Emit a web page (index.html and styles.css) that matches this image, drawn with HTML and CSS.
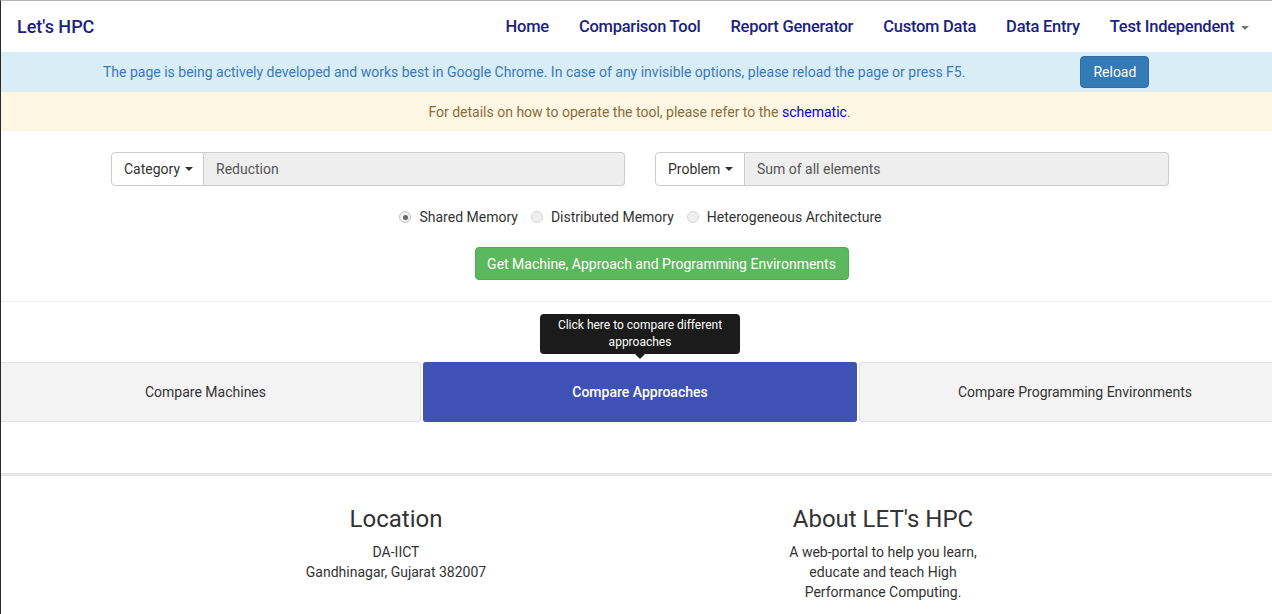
FILE: index.html
```html
<!DOCTYPE html>
<html>
<head>
<meta charset="utf-8">
<link rel="stylesheet" href="styles.css">
</head>
<body>
<div class="page">
  <nav class="navbar">
    <a class="brand">Let's HPC</a>
    <ul class="nav">
      <li>Home</li>
      <li>Comparison Tool</li>
      <li>Report Generator</li>
      <li>Custom Data</li>
      <li>Data Entry</li>
      <li>Test Independent <span class="caret nav-caret"></span></li>
    </ul>
  </nav>
  <div class="alert-info">
    <span class="info-text">The page is being actively developed and works best in Google Chrome. In case of any invisible options, please reload the page or press F5.</span>
    <button class="btn-reload">Reload</button>
  </div>
  <div class="alert-warning"><span>For details on how to operate the tool, please refer to the <a class="link">schematic</a>.</span></div>

  <div class="selectors">
    <div class="input-group">
      <div class="ig-btn cat">Category <span class="caret"></span></div>
      <div class="ig-field">Reduction</div>
    </div>
    <div class="input-group">
      <div class="ig-btn prob">Problem <span class="caret"></span></div>
      <div class="ig-field">Sum of all elements</div>
    </div>
  </div>

  <div class="radios">
    <label class="radio"><span class="dot checked"></span>Shared Memory</label>
    <label class="radio"><span class="dot"></span>Distributed Memory</label>
    <label class="radio"><span class="dot"></span>Heterogeneous Architecture</label>
  </div>

  <div class="action">
    <button class="btn-success">Get Machine, Approach and Programming Environments</button>
  </div>

  <hr class="divider">

  <div class="tabs-area">
    <div class="tabs">
      <div class="tab t1">Compare Machines</div>
      <div class="tab t2 active">Compare Approaches
        <div class="tooltip">Click here to compare different approaches</div>
      </div>
      <div class="tab t3">Compare Programming Environments</div>
    </div>
  </div>

  <footer class="footer">
    <div class="fcol c1">
      <h3>Location</h3>
      <p>DA-IICT<br>Gandhinagar, Gujarat 382007</p>
    </div>
    <div class="fcol c2">
      <h3>About LET's HPC</h3>
      <p>A web-portal to help you learn, educate and teach High Performance Computing.</p>
    </div>
  </footer>
</div>
</body>
</html>
```
FILE: styles.css
```css
html, body {
  margin: 0;
  padding: 0;
  background: #fff;
  overflow: hidden;
}
body {
  font-family: Roboto, "Liberation Sans", Arial, sans-serif;
  font-size: 14px;
  color: #333;
  border-top: 1px solid #b4b4b4;
  border-left: 1px solid #2a2a2a;
  height: 613px;
}
.page {
  width: 1279px;
}
.navbar {
  height: 51px;
  display: flex;
  align-items: center;
  justify-content: space-between;
  padding: 0 16px 0 16px;
}
.brand {
  font-size: 18px;
  font-weight: 500;
  color: #1a237e;
  margin-top: -1px;
}
.nav {
  list-style: none;
  display: flex;
  margin: 0;
  padding: 0;
}
.nav li {
  font-size: 16.5px;
  font-weight: 500;
  color: #1a237e;
  padding: 0 15px;
  letter-spacing: -0.25px;
}
.caret {
  display: inline-block;
  width: 0;
  height: 0;
  border-top: 4px solid #333;
  border-left: 4px solid transparent;
  border-right: 4px solid transparent;
  vertical-align: middle;
  margin-left: 1px;
}
.nav-caret {
  border-top-color: #777;
  margin-left: 3px;
}
.alert-info {
  height: 40px;
  background: #d9edf7;
  display: flex;
  align-items: center;
  padding-left: 102px;
}
.info-text {
  color: #3a7ab8;
}
.btn-reload {
  margin-left: 115px;
  height: 32px;
  width: 69px;
  background: #337ab7;
  border: 1px solid #2e6da4;
  border-radius: 4px;
  color: #fff;
  font-family: inherit;
  font-size: 14px;
  padding: 0;
}
.alert-warning {
  height: 39px;
  background: #fcf6e2;
  color: #8a6d3b;
  display: flex;
  align-items: center;
  justify-content: center;
  padding-right: 2px;
}
.link {
  color: #0000ee;
}
.selectors {
  display: flex;
  gap: 30px;
  padding: 21px 0 0 110px;
}
.input-group {
  width: 514px;
  height: 34px;
  display: flex;
  box-sizing: border-box;
}
.ig-btn {
  display: flex;
  align-items: center;
  gap: 4px;
  padding: 0 12px;
  box-sizing: border-box;
  border: 1px solid #ccc;
  border-radius: 4px 0 0 4px;
  background: #fff;
  color: #333;
}
.ig-btn.cat { width: 93px; }
.ig-btn.prob { width: 90px; }
.ig-field {
  flex: 1;
  display: flex;
  align-items: center;
  padding-left: 12px;
  background: #eee;
  border: 1px solid #ccc;
  border-left: 0;
  border-radius: 0 4px 4px 0;
  color: #555;
}
.radios {
  display: flex;
  justify-content: center;
  gap: 13px;
  margin-top: 21px;
  height: 20px;
  align-items: center;
}
.radio {
  display: flex;
  align-items: center;
  gap: 8px;
  color: #333;
}
.dot {
  width: 12px;
  height: 12px;
  box-sizing: border-box;
  border-radius: 50%;
  border: 1px solid #d6d6d6;
  background: #efefef;
  display: flex;
  align-items: center;
  justify-content: center;
}
.dot.checked {
  border-color: #c4c4c4;
}
.dot.checked::after {
  content: "";
  width: 5px;
  height: 5px;
  border-radius: 50%;
  background: #666;
}
.action {
  display: flex;
  justify-content: center;
  padding-left: 42px;
  margin-top: 20px;
}
.btn-success {
  height: 33px;
  width: 374px;
  background: #5cb85c;
  border: 1px solid #4cae4c;
  border-radius: 4px;
  color: #fff;
  font-family: inherit;
  font-size: 14px;
  padding: 0;
}
.divider {
  border: 0;
  border-top: 1px solid #eee;
  margin: 21px 0 0 0;
}
.tabs-area {
  padding: 60px 0 51px 0;
  border-bottom: 3px solid #e6e6e6;
}
.tabs {
  display: flex;
  gap: 2px;
  height: 60px;
}
.tab {
  position: relative;
  display: flex;
  align-items: center;
  justify-content: center;
  background: #f3f3f3;
  border-top: 1px solid #e0e0e0;
  border-bottom: 1px solid #e0e0e0;
  box-sizing: border-box;
  color: #333;
}
.tab.t1 { width: 420px; padding-right: 10px; border-radius: 0 3px 3px 0; border-right: 1px solid #e0e0e0; }
.tab.t2 { width: 434px; }
.tab.t3 { flex: 1; padding-left: 10px; border-left: 1px solid #e0e0e0; border-radius: 3px 0 0 3px; }
.tab.active {
  background: #3f51b5;
  border-color: #3f51b5;
  color: #fff;
  font-weight: 500;
  border-radius: 3px;
}
.tooltip {
  position: absolute;
  left: 50%;
  bottom: 100%;
  margin-bottom: 9px;
  transform: translateX(-50%);
  width: 200px;
  box-sizing: border-box;
  padding: 3px 8px;
  background: #1b1b1b;
  color: #fff;
  font-size: 12px;
  font-weight: 400;
  line-height: 17px;
  text-align: center;
  border-radius: 4px;
}
.tooltip::after {
  content: "";
  position: absolute;
  top: 100%;
  left: 50%;
  margin-left: -5px;
  border-top: 5px solid #1b1b1b;
  border-left: 5px solid transparent;
  border-right: 5px solid transparent;
}
.footer {
  display: flex;
  gap: 287px;
  padding-left: 295px;
}
.fcol {
  width: 200px;
  text-align: center;
}
.fcol h3 {
  font-size: 24px;
  font-weight: 400;
  margin: 28px 0 0 0;
  line-height: 30px;
  color: #333;
}
.fcol p {
  margin: 8px 0 0 0;
  line-height: 20px;
}
.fcol.c2 p {
  padding: 0 6px;
}
```
